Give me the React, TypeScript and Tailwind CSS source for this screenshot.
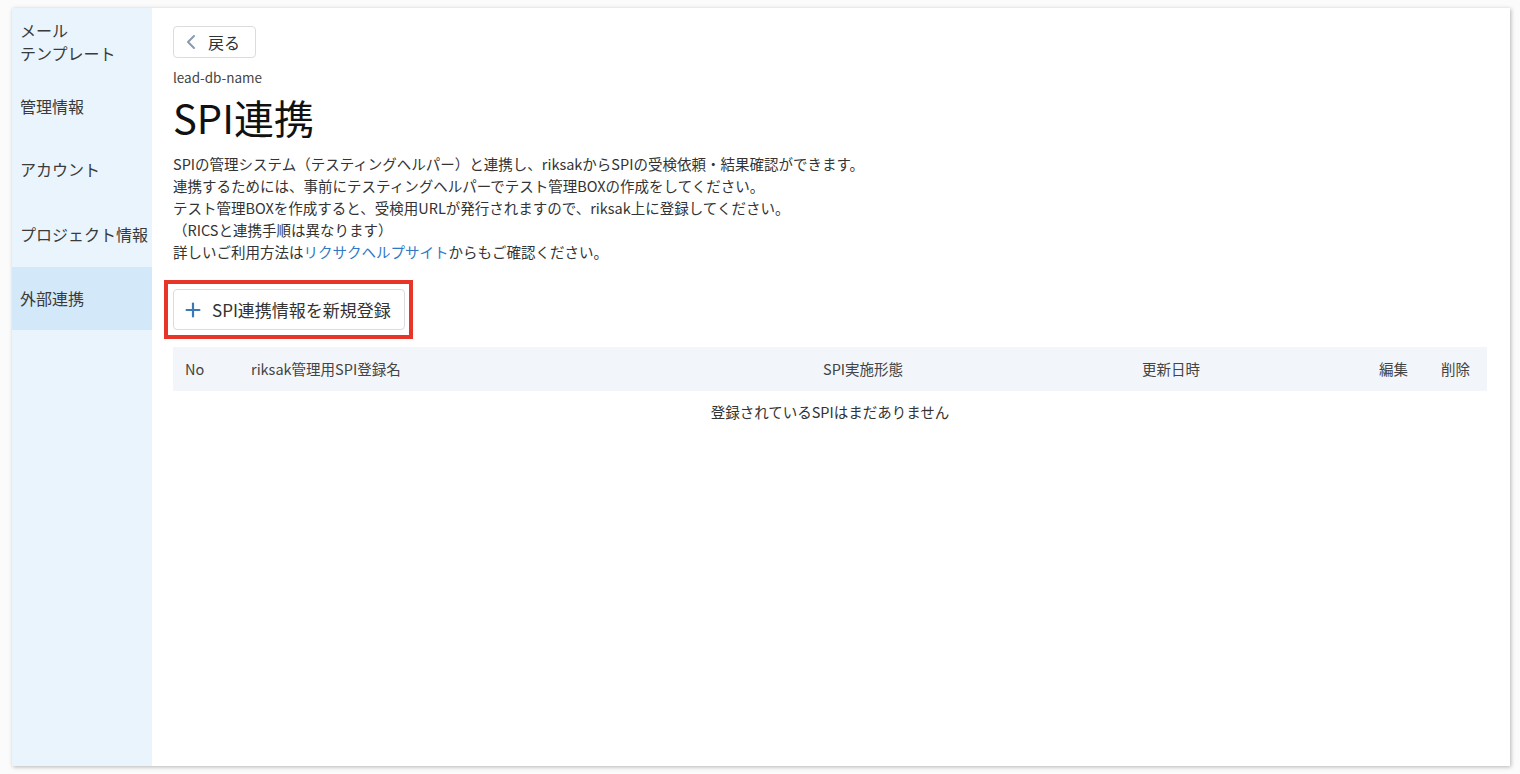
import { ChevronLeft, Plus } from 'lucide-react'

const font = { fontFamily: '"Noto Sans CJK JP", "Noto Sans", sans-serif' }

const menu = [
  { label: 'メール\nテンプレート', h: 'h-[67px]' },
  { label: '管理情報', h: 'h-[62px]' },
  { label: 'アカウント', h: 'h-[65px]' },
  { label: 'プロジェクト情報', h: 'h-[65px]' },
  { label: '外部連携', h: 'h-[63px]', active: true },
]

const columns = [
  { label: 'No', cls: 'w-[78px] pl-[12px]' },
  { label: 'riksak管理用SPI登録名', cls: 'w-[572px]' },
  { label: 'SPI実施形態', cls: 'w-[319px]' },
  { label: '更新日時', cls: 'flex-1' },
  { label: '編集', cls: 'w-[62px]' },
  { label: '削除', cls: 'w-[46px]' },
]

export default function App() {
  return (
    <div className="w-[1520px] h-[774px] bg-[#fbfbfb] pt-[8px] pl-[12px]" style={font}>
      <div className="w-[1498px] h-[758px] flex bg-white shadow-[1px_1px_4px_rgba(0,0,0,0.28)]">
        <aside className="w-[140px] shrink-0 bg-[#e9f4fd] text-[#3a3a3a] text-[16px]">
          {menu.map((m) => (
            <div
              key={m.label}
              className={`${m.h} flex items-center pl-[8px] leading-[23px] whitespace-pre-line ${m.active ? 'bg-[#d3e8f9]' : ''}`}
            >
              {m.label}
            </div>
          ))}
        </aside>

        <main className="flex-1 pl-[21px] pr-[23px] pt-[18px] text-[#333]">
          <button className="h-[32px] w-[83px] flex items-center gap-[5px] pl-[5px] border border-[#dcdcdc] rounded-[4px] bg-white text-[16px] text-[#333]">
            <ChevronLeft size={24} strokeWidth={2} className="text-[#8a9ab0]" />
            戻る
          </button>

          <div className="mt-[10px] text-[13.5px] leading-[18px] text-[#444]">lead-db-name</div>
          <h1 className="mt-[7px] text-[40px] leading-[48px] text-[#111]">SPI連携</h1>

          <div className="mt-[12px] text-[14.5px] leading-[22px] text-[#333]">
            <p>SPIの管理システム（テスティングヘルパー）と連携し、riksakからSPIの受検依頼・結果確認ができます。</p>
            <p>連携するためには、事前にテスティングヘルパーでテスト管理BOXの作成をしてください。</p>
            <p>テスト管理BOXを作成すると、受検用URLが発行されますので、riksak上に登録してください。</p>
            <p>（RICSと連携手順は異なります）</p>
            <p>
              詳しいご利用方法は<span className="text-[#2f78c4]">リクサクヘルプサイト</span>からもご確認ください。
            </p>
          </div>

          <div className="mt-[17px] -ml-[9px] w-[249px] h-[59px] border-[4px] border-[#e8352a] p-[5px]">
            <button className="h-[41px] w-[232px] flex items-center gap-[8px] pl-[8px] border border-[#dcdcdc] rounded-[4px] bg-white text-[17px] text-[#333]">
              <Plus size={22} strokeWidth={2.4} className="text-[#3a78b8]" />
              SPI連携情報を新規登録
            </button>
          </div>

          <div className="mt-[8px] w-[1314px]">
            <div className="h-[44px] flex items-center bg-[#f2f6fa] text-[14.5px] text-[#444]">
              {columns.map((c) => (
                <div key={c.label} className={c.cls}>
                  {c.label}
                </div>
              ))}
            </div>
            <div className="h-[42px] flex items-center justify-center text-[14.5px] text-[#333]">
              登録されているSPIはまだありません
            </div>
          </div>
        </main>
      </div>
    </div>
  )
}
